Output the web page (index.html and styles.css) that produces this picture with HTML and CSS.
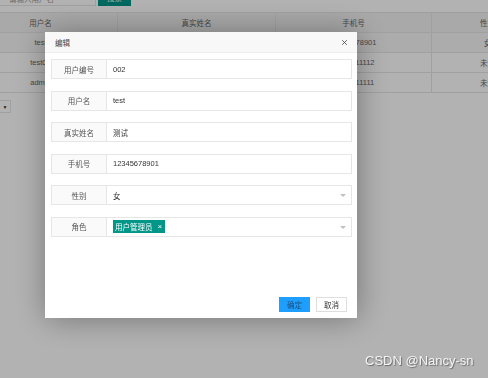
FILE: index.html
```html
<!DOCTYPE html>
<html lang="zh-CN">
<head>
<meta charset="utf-8">
<title>编辑</title>
<link rel="stylesheet" href="styles.css">
</head>
<body>
<div class="page">
  <div class="toolbar">
    <div class="search-input">请输入用户名</div>
    <div class="search-btn">搜索</div>
  </div>
  <div class="table">
    <div class="row head">
      <div class="cell">用户名</div><div class="cell">真实姓名</div><div class="cell">手机号</div><div class="cell">性别</div>
    </div>
    <div class="row hover">
      <div class="cell">test</div><div class="cell">测试</div><div class="cell">12345678901</div><div class="cell">女</div>
    </div>
    <div class="row">
      <div class="cell">test01</div><div class="cell">测试01</div><div class="cell">13111111112</div><div class="cell">未知</div>
    </div>
    <div class="row">
      <div class="cell">admin</div><div class="cell">管理员</div><div class="cell">13111111111</div><div class="cell">未知</div>
    </div>
  </div>
  <div class="pager"><span class="pager-select">▼</span></div>
</div>

<div class="shade"></div>

<div class="layer">
  <div class="layer-title">
    <span>编辑</span>
    <svg class="layer-close" width="7" height="7" viewBox="0 0 7 7"><path d="M1.2 1.2L5.8 5.8M5.8 1.2L1.2 5.8" stroke="#555" stroke-width="0.9" fill="none"/></svg>
  </div>
  <div class="layer-body">
    <div class="form-item"><div class="label">用户编号</div><div class="field">002</div></div>
    <div class="form-item"><div class="label">用户名</div><div class="field">test</div></div>
    <div class="form-item"><div class="label">真实姓名</div><div class="field">测试</div></div>
    <div class="form-item"><div class="label">手机号</div><div class="field">12345678901</div></div>
    <div class="form-item"><div class="label">性别</div><div class="field select">女<span class="caret"></span></div></div>
    <div class="form-item"><div class="label">角色</div><div class="field select"><span class="tag">用户管理员<span class="tag-x">×</span></span><span class="caret"></span></div></div>
  </div>
  <div class="layer-btns">
    <span class="btn btn-primary">确定</span>
    <span class="btn">取消</span>
  </div>
</div>

<div class="watermark">CSDN @Nancy-sn</div>
</body>
</html>
```

FILE: styles.css
```css
* { box-sizing: border-box; }
html, body { margin: 0; padding: 0; }
body {
  width: 488px;
  height: 378px;
  overflow: hidden;
  background: #fff;
  font-family: "Liberation Sans", "Noto Sans CJK SC", sans-serif;
  font-size: 7.5px;
  color: #333;
}

.page { width: 488px; overflow: hidden; }

.toolbar {
  display: flex;
  gap: 2px;
  height: 6px;
  align-items: flex-end;
}
.search-input {
  width: 98px;
  height: 20px;
  flex: none;
  border: 1px solid #e6e6e6;
  padding: 6px 0 0 10px;
  color: #999;
  margin-left: -2px;
}
.search-btn {
  width: 33px;
  height: 20px;
  flex: none;
  background: #009688;
  color: #fff;
  text-align: center;
  padding-top: 6px;
}

.table {
  margin-top: 6px;
  margin-left: -36px;
  width: 580px;
  border-top: 1px solid #e6e6e6;
}
.row {
  display: grid;
  grid-template-columns: 154px 158px 156px 112px;
  height: 20px;
  border-bottom: 1px solid #e6e6e6;
}
.row.head { background: #f2f2f2; }
.row.hover { background: #f6f6f6; }
.cell {
  border-right: 1px solid #e6e6e6;
  display: flex;
  align-items: center;
  justify-content: center;
  color: #666;
}

.pager { padding: 7px 0 0 0; }
.pager-select {
  display: inline-flex;
  align-items: center;
  justify-content: center;
  width: 12px;
  height: 13px;
  margin-left: -1px;
  border: 1px solid #e6e6e6;
  font-size: 5px;
  color: #333;
}

.shade {
  position: fixed;
  inset: 0;
  background: rgba(0, 0, 0, 0.3);
}

.layer {
  position: fixed;
  left: 45px;
  top: 32px;
  width: 312px;
  height: 286px;
  background: #fff;
  box-shadow: 1px 1px 30px rgba(0, 0, 0, 0.35);
  display: flex;
  flex-direction: column;
}
.layer-title {
  height: 21px;
  flex: none;
  background: #f8f8f8;
  border-bottom: 1px solid #eee;
  display: flex;
  align-items: center;
  justify-content: space-between;
  padding: 0 9px 0 10px;
  color: #444;
}
.layer-close { display: block; }

.layer-body {
  padding: 6px 5px 0 6px;
  display: flex;
  flex-direction: column;
  gap: 11.6px;
}
.form-item {
  display: flex;
  height: 20px;
}
.label {
  width: 56px;
  flex: none;
  background: #fafafa;
  border: 1px solid #e6e6e6;
  display: flex;
  align-items: center;
  justify-content: center;
  color: #555;
}
.field {
  flex: 1;
  border: 1px solid #e6e6e6;
  border-left: none;
  display: flex;
  align-items: center;
  padding-left: 6px;
  color: #333;
  position: relative;
}
.caret {
  position: absolute;
  right: 5px;
  top: 8px;
  width: 0;
  height: 0;
  border-left: 3px solid transparent;
  border-right: 3px solid transparent;
  border-top: 3px solid #c2c2c2;
}
.tag {
  display: inline-flex;
  align-items: center;
  height: 13px;
  background: #009688;
  color: #fff;
  padding: 0 3px 0 2px;
  gap: 5px;
}
.tag-x { font-size: 8px; }

.layer-btns {
  margin-top: auto;
  display: flex;
  justify-content: flex-end;
  gap: 6px;
  padding: 0 10px 6px 0;
}
.btn {
  width: 31px;
  height: 15px;
  border: 1px solid #dedede;
  background: #fff;
  color: #333;
  display: flex;
  align-items: center;
  justify-content: center;
}
.btn-primary {
  background: #1e9fff;
  border-color: #1e9fff;
  color: #1c4f7c;
}

.watermark {
  position: fixed;
  left: 365px;
  top: 353px;
  font-size: 13px;
  color: #f4f4f4;
  text-shadow: 1px 1px 1px #6a6a6a;
  white-space: nowrap;
}
```
